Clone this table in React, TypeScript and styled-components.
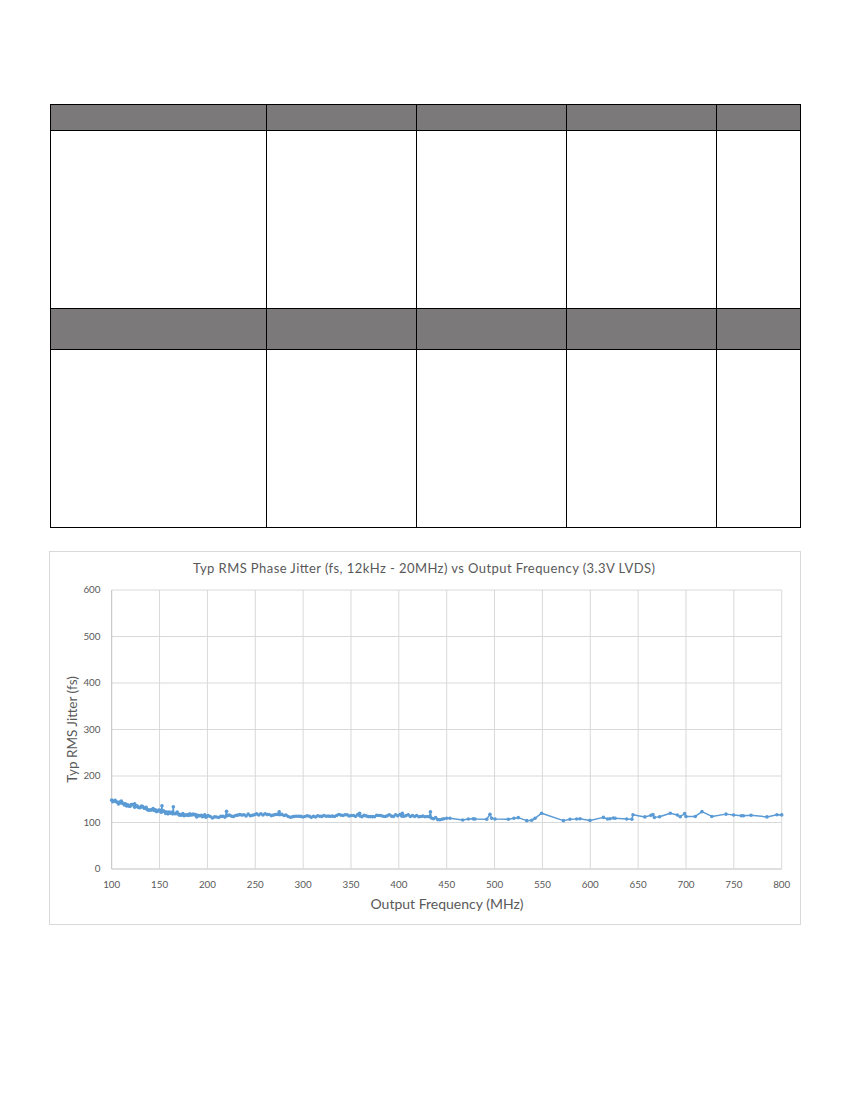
import React from "react";
import styled, { createGlobalStyle } from "styled-components";

const GlobalStyle = createGlobalStyle`
  html, body { margin: 0; padding: 0; background: #ffffff; }
  body { font-family: "Lato", "Open Sans", sans-serif; }
`;

const Page = styled.div`
  width: 850px;
  min-height: 1100px;
  box-sizing: border-box;
  padding: 104px 50px 0 50px;
  background: #ffffff;
`;

const SpecTable = styled.table`
  width: 750px;
  border-collapse: collapse;
  table-layout: fixed;
`;

const Row = styled.tr<{ $h: number }>`
  height: ${(p) => p.$h}px;
`;

const HeadCell = styled.td`
  background: #7b7979;
  border: 1px solid #000000;
  padding: 0;
`;

const BodyCell = styled.td`
  background: #ffffff;
  border: 1px solid #000000;
  padding: 0;
`;

const ChartFrame = styled.div`
  margin: 23px 0 0 -1px;
  width: 752px;
  height: 374px;
  box-sizing: border-box;
  border: 1px solid #d9d9d9;
  background: #ffffff;
`;

const ChartSvg = styled.svg`
  display: block;
  font-family: "Lato", "Open Sans", sans-serif;
`;

const COLS = [216, 150, 150, 150, 84];

// chart geometry
const L = 61.7;
const R = 731.7;
const T = 38;
const B = 317;
const px = (x: number) => L + ((x - 100) * (R - L)) / 700;
const py = (v: number) => B - (v * (B - T)) / 600;

const baseKeys: [number, number][] = [
  [100, 147], [105, 143], [115, 138], [125, 135], [135, 131], [140, 128],
  [150, 124], [160, 121], [170, 119], [185, 116], [200, 113], [210, 111],
  [220, 113], [235, 115.5], [250, 117], [265, 117.5], [283, 114], [300, 112],
  [320, 114], [340, 115], [360, 115], [380, 114], [400, 115], [415, 114],
  [430, 112], [445, 107],
];

const base = (x: number) => {
  for (let i = 0; i < baseKeys.length - 1; i++) {
    const [x0, y0] = baseKeys[i];
    const [x1, y1] = baseKeys[i + 1];
    if (x >= x0 && x <= x1) return y0 + ((x - x0) * (y1 - y0)) / (x1 - x0);
  }
  return baseKeys[baseKeys.length - 1][1];
};

const spikes: [number, number][] = [
  [110, 146], [124, 140], [152.5, 136], [164.4, 134], [220, 124],
  [275, 123], [359, 120], [403.6, 120], [433, 123],
];

const sparse: [number, number][] = [
  [447, 108], [450, 109], [453.4, 109], [466.7, 105.4], [472.6, 107.5],
  [477.8, 107.8], [479.6, 107.5], [491.8, 107], [495.2, 117.6], [497, 109],
  [500.5, 107.5], [514.4, 107], [520.3, 109], [524.8, 110.4], [533.6, 104],
  [538.8, 105], [542.3, 109], [549.2, 120], [571.9, 104], [578.8, 107],
  [585.8, 107.5], [589.3, 108], [599.7, 104.5], [613.7, 111], [618, 107.5],
  [620.6, 108], [624.1, 109.7], [626, 109], [638, 107.5], [643.5, 107],
  [644.6, 116.8], [657, 112], [663.4, 115.4], [665.5, 117], [667, 111],
  [672.4, 112.5], [683.6, 119.8], [691, 116], [694, 112.5], [698.6, 119],
  [700, 113], [709.7, 113], [716.7, 123.3], [727, 113], [741.8, 118],
  [749.8, 116], [757.8, 114.5], [760, 114.5], [768, 115.5], [784.6, 112],
  [795, 116.8], [800, 116.3],
];

const buildData = (): [number, number][] => {
  let seed = 12345;
  const rnd = () => {
    seed = (seed * 1103515245 + 12345) % 2147483648;
    return seed / 2147483648;
  };
  const pts: [number, number][] = [];
  let x = 100;
  while (x < 445) {
    const amp = x < 200 ? 3.4 : 2.4;
    pts.push([x, base(x) + (rnd() * 2 - 1) * amp]);
    x += x < 200 ? 1.2 : 2.2;
  }
  spikes.forEach((s) => pts.push(s));
  pts.sort((a, b) => a[0] - b[0]);
  return [...pts, ...sparse];
};

const DATA = buildData();

const Chart: React.FC = () => {
  const xTicks = Array.from({ length: 15 }, (_, i) => 100 + i * 50);
  const yTicks = Array.from({ length: 7 }, (_, i) => i * 100);
  const path = DATA.map(([x, v], i) => `${i ? "L" : "M"}${px(x).toFixed(2)} ${py(v).toFixed(2)}`).join(" ");
  return (
    <ChartSvg width={750} height={372} viewBox="0 0 750 372">
      <text x={374} y={21.3} textAnchor="middle" fontSize={13} fill="#595959" textLength={462} lengthAdjust="spacing">
        Typ RMS Phase Jitter (fs, 12kHz - 20MHz) vs Output Frequency (3.3V LVDS)
      </text>
      {yTicks.map((v) => (
        <line key={`h${v}`} x1={L} x2={R} y1={py(v)} y2={py(v)} stroke={v === 0 ? "#bfbfbf" : "#d9d9d9"} strokeWidth={1} />
      ))}
      {xTicks.map((x) => (
        <line key={`v${x}`} x1={px(x)} x2={px(x)} y1={T} y2={B} stroke={x === 100 ? "#bfbfbf" : "#d9d9d9"} strokeWidth={1} />
      ))}
      {yTicks.map((v) => (
        <text key={`yl${v}`} x={50.5} y={py(v) + 3.4} textAnchor="end" fontSize={9.8} fill="#595959">
          {v}
        </text>
      ))}
      {xTicks.map((x) => (
        <text key={`xl${x}`} x={px(x)} y={336} textAnchor="middle" fontSize={9.8} fill="#595959">
          {x}
        </text>
      ))}
      <text x={397} y={357} textAnchor="middle" fontSize={14} fill="#595959">
        Output Frequency (MHz)
      </text>
      <text
        x={0}
        y={0}
        transform="translate(27 177.5) rotate(-90)"
        textAnchor="middle"
        fontSize={13.5}
        fill="#595959"
      >
        Typ RMS Jitter (fs)
      </text>
      <path d={path} fill="none" stroke="#5b9bd5" strokeWidth={1.5} strokeLinejoin="round" />
      {DATA.map(([x, v], i) => (
        <circle key={i} cx={px(x)} cy={py(v)} r={1.8} fill="#5b9bd5" />
      ))}
    </ChartSvg>
  );
};

const HEIGHTS = [26, 178, 41, 178];

export default function App() {
  return (
    <>
      <GlobalStyle />
      <Page>
        <SpecTable>
          <colgroup>
            {COLS.map((w, i) => (
              <col key={i} style={{ width: w }} />
            ))}
          </colgroup>
          <tbody>
            {HEIGHTS.map((h, r) => (
              <Row key={r} $h={h}>
                {COLS.map((_, c) =>
                  r % 2 === 0 ? <HeadCell key={c} /> : <BodyCell key={c} />
                )}
              </Row>
            ))}
          </tbody>
        </SpecTable>
        <ChartFrame>
          <Chart />
        </ChartFrame>
      </Page>
    </>
  );
}
